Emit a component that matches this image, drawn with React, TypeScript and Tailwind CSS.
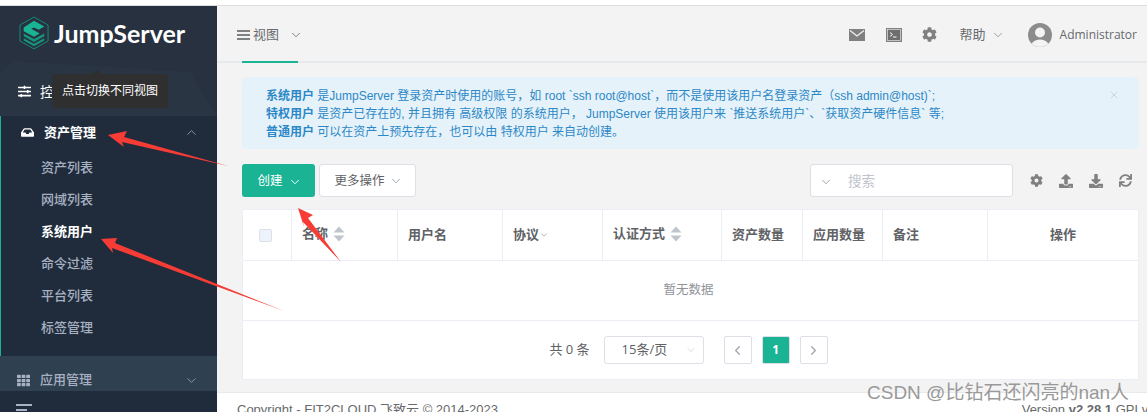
import { FaCog, FaDownload, FaInbox, FaSlidersH, FaSync, FaTh, FaUpload } from 'react-icons/fa';
import { ChevronDown, ChevronLeft, ChevronRight, ChevronUp, X } from 'lucide-react';

const FONT = "font-['Open_Sans','Noto_Sans_CJK_SC',sans-serif]";
const ARIAL = "font-['Liberation_Sans','Noto_Sans_CJK_SC',sans-serif]";

const subMenu = ['资产列表', '网域列表', '系统用户', '命令过滤', '平台列表', '标签管理'];

function Logo() {
  return (
    <svg width="30" height="36" viewBox="0 0 32 36" className="shrink-0">
      <path d="M16 1 L31 9.5 V26.5 L16 35 L1 26.5 V9.5 Z" fill="none" stroke="#1a8f78" strokeWidth="1" />
      <path d="M16 5 L27 11 L21 14.5 L16 12 L13 13.5 L22 18.5 L16 22 L5 16 V12 Z" fill="#1ab394" />
      <path d="M5 18.5 L16 24.5 L27 18.5 V21.5 L16 27.5 L5 21.5 Z" fill="#17967d" />
      <path d="M5 23.5 L16 29.5 L27 23.5 V26 L16 32 L5 26 Z" fill="#17967d" />
    </svg>
  );
}

function Sidebar() {
  return (
    <aside className="w-[217px] shrink-0 flex flex-col overflow-hidden bg-[#202c3c] text-[#a7b1c2]">
      <div className="relative h-[110px] shrink-0 bg-[#27313f]">
        {/* faint polygon pattern behind the logo */}
        <svg width="217" height="110" className="absolute inset-0">
          <polygon points="14,55 190,66 217,110 0,110 0,66" fill="#2a3543" />
        </svg>
        <div className="relative h-[61px] flex items-center pl-[19px] pb-[7px] gap-[5px]">
          <Logo />
          <span className="font-['Lato',sans-serif] font-bold text-[25px] leading-none text-white">JumpServer</span>
        </div>
        <div className="relative h-[49px] flex items-center pl-[18px] gap-[9px] text-white">
          <FaSlidersH size={13} />
          <span className="text-[14px]">控</span>
        </div>
      </div>
      <div className="h-[240px] shrink-0 border-l border-[#1ab394] flex flex-col">
        <div className="h-[33px] shrink-0 flex items-center pl-[20px] pr-[18px] text-white">
          <FaInbox size={13} />
          <span className="ml-[10px] text-[13px] font-bold">资产管理</span>
          <ChevronUp size={15} strokeWidth={1.5} className="ml-auto text-[#8a97a8]" />
        </div>
        <ul className="mt-[3px]">
          {subMenu.map((name) => (
            <li
              key={name}
              className={`h-[32px] flex items-center pl-[40px] text-[13px] ${name === '系统用户' ? 'text-white font-bold' : 'font-medium'}`}
            >
              {name}
            </li>
          ))}
        </ul>
      </div>
      <div className="h-[35px] shrink-0 pt-[13px] bg-[#2f4050] flex items-center pl-[17px] pr-[18px]">
        <FaTh size={13} />
        <span className="ml-[10px] text-[13px] font-medium">应用管理</span>
        <ChevronDown size={15} strokeWidth={1.5} className="ml-auto text-[#8a97a8]" />
      </div>
      <div className="pl-[16px] pt-[13px]">
        <svg width="16" height="12" viewBox="0 0 16 12" fill="#a7b1c2">
          <rect x="0" y="0" width="16" height="2" />
          <rect x="0" y="5" width="11" height="2" />
          <rect x="0" y="10" width="16" height="2" />
        </svg>
      </div>
    </aside>
  );
}

function TopBar() {
  return (
    <header className="h-[57px] shrink-0 flex items-center border-b-2 border-[#e7eaec] pt-[2px] pl-[20px] pr-[10px] text-[#676a6c] relative">
      <span className="absolute left-[25px] bottom-[-2px] w-[56px] h-[2px] bg-[#1ab394]" />
      <svg width="13" height="10" viewBox="0 0 13 10" fill="#808080">
        <rect width="13" height="2" />
        <rect y="4" width="13" height="2" />
        <rect y="8" width="13" height="2" />
      </svg>
      <span className="ml-[3px] text-[13px]">视图</span>
      <ChevronDown size={14} strokeWidth={1.4} className="ml-[10px]" />
      <div className="ml-auto flex items-center">
        <svg width="16" height="12" viewBox="0 0 16 12">
          <rect width="16" height="12" fill="#808080" />
          <path d="M1 1.5 L8 7 L15 1.5" fill="none" stroke="#f3f3f4" strokeWidth="1.2" />
        </svg>
        <svg width="16" height="14" viewBox="0 0 16 14" className="ml-[21px]">
          <rect x="0.5" y="0.5" width="15" height="13" fill="#808080" stroke="#808080" />
          <rect x="1.5" y="1.5" width="13" height="11" fill="#6e6e6e" stroke="#f3f3f4" strokeWidth="0.6" />
          <path d="M4 4.5 L6.5 6.5 L4 8.5 M7 9 H10.5" fill="none" stroke="#fff" strokeWidth="1" />
        </svg>
        <FaCog size={15} color="#808080" className="ml-[20px]" />
        <span className="ml-[23px] text-[13px]">帮助</span>
        <ChevronDown size={14} strokeWidth={1.4} className="ml-[5px] text-[#8a8f94]" />
        <svg width="24" height="24" viewBox="0 0 24 24" className="ml-[23px]">
          <defs>
            <clipPath id="avatar-clip">
              <circle cx="12" cy="12" r="12" />
            </clipPath>
          </defs>
          <g clipPath="url(#avatar-clip)">
            <rect width="24" height="24" fill="#8c8c8c" />
            <circle cx="12" cy="9.5" r="5" fill="#f3f3f4" />
            <ellipse cx="12" cy="23" rx="9" ry="6.5" fill="#f3f3f4" />
          </g>
        </svg>
        <span className="ml-[8px] text-[12px]">Administrator</span>
      </div>
    </header>
  );
}

function Alert() {
  return (
    <div className={`${ARIAL} h-[72px] rounded-[4px] bg-[#e6f2f9] pl-[24px] pt-[10px] pr-[16px] text-[#2b88c8] text-[12px] leading-[18px] relative`}>
      <X size={12} strokeWidth={1.5} className="absolute right-[19px] top-[12px] text-[#c0c8cf]" />
      <p><b>系统用户</b> 是JumpServer 登录资产时使用的账号，如 root `ssh root@host`，而不是使用该用户名登录资产（ssh admin@host)`;</p>
      <p><b>特权用户</b> 是资产已存在的, 并且拥有 高级权限 的系统用户， JumpServer 使用该用户来 `推送系统用户`、`获取资产硬件信息` 等;</p>
      <p><b>普通用户</b> 可以在资产上预先存在，也可以由 特权用户 来自动创建。</p>
    </div>
  );
}

function Toolbar() {
  return (
    <div className="mt-[15px] flex items-center text-[#808080]">
      <button className="w-[73px] h-[33px] pt-[2px] pl-[2px] rounded-[3px] bg-[#1ab394] text-white text-[12.5px] flex items-center justify-center gap-[5px]">
        创建 <ChevronDown size={14} strokeWidth={1.6} />
      </button>
      <button className="ml-[4px] w-[97px] h-[33px] pt-[1px] pl-[2px] rounded-[3px] bg-white border border-[#dcdfe6] text-[#606266] text-[12.5px] flex items-center justify-center gap-[4px]">
        更多操作 <ChevronDown size={14} strokeWidth={1.4} className="text-[#909399]" />
      </button>
      <div className="ml-auto w-[203px] h-[33px] pt-[2px] rounded-[3px] bg-white border border-[#dcdfe6] flex items-center pl-[8px] text-[#c0c4cc] text-[13.5px]">
        <ChevronDown size={14} strokeWidth={1.4} className="text-[#909399]" />
        <span className="ml-[15px]">搜索</span>
      </div>
      <div className="ml-[17px] w-[109px] flex items-center gap-[16px]">
        <FaCog size={13} />
        <FaUpload size={14} />
        <FaDownload size={14} />
        <FaSync size={13} />
      </div>
    </div>
  );
}

function SortCaret() {
  return (
    <svg width="12" height="16" viewBox="0 0 12 16" fill="#c0c4cc" className="ml-[5px] shrink-0">
      <path d="M6 0.5 L11.5 6.5 H0.5 Z" />
      <path d="M6 15.5 L11.5 9.5 H0.5 Z" />
    </svg>
  );
}

function HeadCell({ label, sort, center, arrow }: { label: string; sort?: boolean; center?: boolean; arrow?: boolean }) {
  return (
    <div className={`flex items-center border-r border-[#ebeef5] last:border-r-0 text-[13px] font-bold text-[#606266] ${center ? 'justify-center' : 'pl-[10px]'} ${sort ? 'pb-[2px]' : ''}`}>
      {label}
      {sort && <SortCaret />}
      {arrow && <ChevronDown size={10} className="text-[#a0a4ac]" />}
    </div>
  );
}

function DataTable() {
  return (
    <div className="mt-[12px] border border-[#ebeef5] bg-white">
      <div className="grid grid-cols-[49px_106px_105px_100px_119px_81px_80px_105px_1fr] h-[51px] border-b border-[#ebeef5]">
        <div className="flex items-center justify-center pr-[4px] border-r border-[#ebeef5]">
          <span className="w-[13px] h-[13px] rounded-[2px] border border-[#dcdfe6] bg-[#edf2fc]" />
        </div>
        <HeadCell label="名称" sort />
        <HeadCell label="用户名" />
        <HeadCell label="协议" arrow />
        <HeadCell label="认证方式" sort />
        <HeadCell label="资产数量" />
        <HeadCell label="应用数量" />
        <HeadCell label="备注" />
        <HeadCell label="操作" center />
      </div>
      <div className="h-[60px] flex items-center justify-center border-b border-[#ebeef5] pr-[4px] text-[12.5px] text-[#909399]">暂无数据</div>
      <div className="h-[58px] flex items-center justify-center pr-[4px] text-[#606266] text-[13px]">
        <span>共 0 条</span>
        <div className="ml-[14px] w-[100px] h-[28px] rounded-[3px] border border-[#dcdfe6] flex items-center pl-[17px] pr-[6px] text-[13px]">
          15条/页
          <ChevronDown size={12} strokeWidth={1} className="ml-auto text-[#b0b4bc]" />
        </div>
        <span className="ml-[20px] w-[28px] h-[28px] rounded-[2px] border border-[#dcdfe6] flex items-center justify-center text-[#a0a4ac]">
          <ChevronLeft size={15} />
        </span>
        <span className="ml-[10px] w-[28px] h-[28px] rounded-[2px] bg-[#1ab394] border border-[#dcdfe6] flex items-center justify-center text-white text-[12px] font-bold">1</span>
        <span className="ml-[10px] w-[28px] h-[28px] rounded-[2px] border border-[#dcdfe6] flex items-center justify-center text-[#a0a4ac]">
          <ChevronRight size={15} />
        </span>
      </div>
    </div>
  );
}

// red annotation arrows and the tooltip sit on top of the screenshot
function Annotations() {
  return (
    <>
      <svg width="1147" height="412" className="absolute inset-0 pointer-events-none">
        <polygon points="108,135 127,131 124,137 228,166 122,142 124,147" fill="#f73c36" />
        <polygon points="101,239 117,238 115,243 284,311 112,248 113,253" fill="#f73c36" />
        <polygon points="298,208 313,215 308,218 341,262 303,222 304,227" fill="#f73c36" />
      </svg>
      <div className="absolute left-[52px] top-[74px] w-[116px] h-[34px] rounded-[4px] bg-[#2f2f2f] text-white text-[12px] flex items-center justify-center">
        点击切换不同视图
        <span className="absolute top-[-4px] left-[40px] w-0 h-0 border-x-[5px] border-x-transparent border-b-[4px] border-b-[#2f2f2f]" />
      </div>
      <span className={`${ARIAL} absolute left-[867px] top-[382px] text-[19px] leading-[22px] text-[#999999]`}>
        CSDN @比钻石还闪亮的nan人
      </span>
    </>
  );
}

export default function App() {
  return (
    <div className={`${FONT} relative w-[1147px] h-[412px] overflow-hidden bg-white flex flex-col`}>
      <div className="h-[6px] shrink-0 bg-white border-b border-[#dcdcdc]" />
      <div className="flex flex-1 min-h-0">
        <Sidebar />
        <main className="flex-1 min-w-0 flex flex-col bg-[#f3f3f4]">
          <TopBar />
          <div className="flex-1 pl-[25px] pr-[8px] pt-[14px]">
            <Alert />
            <Toolbar />
            <DataTable />
          </div>
          <footer className={`${ARIAL} h-[20px] shrink-0 bg-white border-t border-[#e7eaec] flex justify-between pl-[20px] pt-[7px] text-[13px] text-[#676a6c] whitespace-nowrap`}>
            <span>Copyright - FIT2CLOUD 飞致云 © 2014-2023</span>
            <span className="-mr-[12px]">Version <b>v2.28.1</b> GPLv3.</span>
          </footer>
        </main>
      </div>
      <Annotations />
    </div>
  );
}
